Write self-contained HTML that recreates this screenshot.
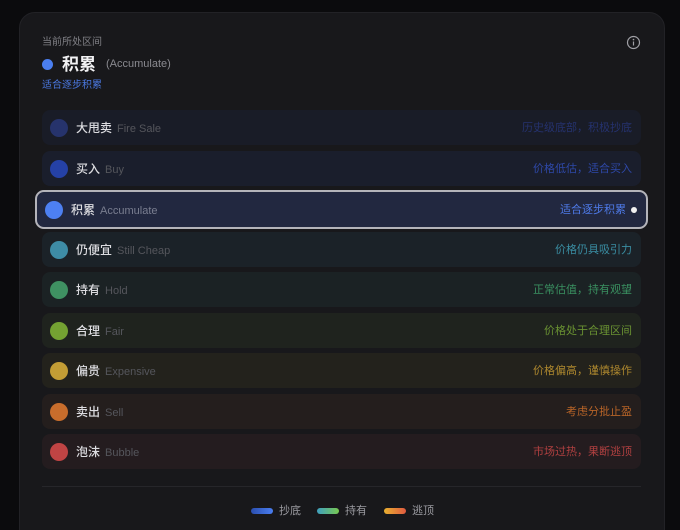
<!DOCTYPE html>
<html><head><meta charset="utf-8"><style>
*{margin:0;padding:0;box-sizing:border-box}
html,body{width:680px;height:530px;overflow:hidden}
body{background:#0b0b0d;font-family:"Liberation Sans","Noto Sans CJK SC",sans-serif;position:relative}
.card{position:absolute;left:19px;top:12px;width:646px;height:540px;background:#18181b;border-radius:16px;border:1px solid #222226}
.a{position:absolute;line-height:1}
.row{position:absolute;left:42px;width:599px;height:35px;border-radius:8px;line-height:36px}
.row .c{position:absolute;left:8px;top:8.5px;width:18px;height:18px;border-radius:50%}
.row .zh{position:absolute;left:34px;top:0;font-size:12px;color:#dcdce0;font-weight:500}
.row .en{font-weight:normal;color:#55565c;font-size:11px;margin-left:5px}
.row .r{position:absolute;right:9px;top:0;font-size:11px}
.lg{position:absolute;top:508px;height:6px;width:22px;border-radius:3px}
.lt{position:absolute;top:506px;font-size:11px;color:#9a9aa0;line-height:1}
</style></head><body>
<div class="card"></div>
<div class="a" style="left:42px;top:38px;font-size:10px;color:#808086">当前所处区间</div>
<div class="a" style="left:42px;top:59px;width:11px;height:11px;border-radius:50%;background:#4a7ef0"></div>
<div class="a" style="left:62px;top:56px;font-size:17px;font-weight:bold;color:#f2f2f4">积累</div>
<div class="a" style="left:106px;top:59px;font-size:11px;color:#8a8a90">(Accumulate)</div>
<div class="a" style="left:42px;top:81px;font-size:10px;color:#4a78e0">适合逐步积累</div>
<svg class="a" style="left:626px;top:35px" width="15" height="15" viewBox="0 0 15 15"><circle cx="7.5" cy="7.5" r="6" fill="none" stroke="#a0a0a6" stroke-width="1.2"/><line x1="7.5" y1="6.5" x2="7.5" y2="10.5" stroke="#a0a0a6" stroke-width="1.2"/><circle cx="7.5" cy="4.6" r="0.8" fill="#a0a0a6"/></svg>

<div class="row" style="top:110px;background:#191c27"><div class="c" style="background:#26336c"></div><div class="zh">大甩卖<span class="en">Fire Sale</span></div><div class="r" style="color:#25326e">历史级底部，积极抄底</div></div>
<div class="row" style="top:151px;background:#1a1e2c"><div class="c" style="background:#2541a6"></div><div class="zh">买入<span class="en">Buy</span></div><div class="r" style="color:#2e48a8">价格低估，适合买入</div></div>
<div class="row" style="left:35px;width:613px;top:190px;height:39px;line-height:36px;background:#222840;border:2px solid #b4b4ba;border-radius:9px"><div class="c" style="left:8px;top:8.5px;background:#4d80f2"></div><div class="zh" style="left:34px">积累<span class="en" style="color:#7a7e90">Accumulate</span></div><div class="r" style="right:20px;color:#4e7ae8">适合逐步积累</div><div class="a" style="right:9px;top:15px;width:6px;height:6px;border-radius:50%;background:#f0f0f0"></div></div>
<div class="row" style="top:232px;background:#1b2228"><div class="c" style="background:#3e8ca6"></div><div class="zh">仍便宜<span class="en">Still Cheap</span></div><div class="r" style="color:#3a8ea3">价格仍具吸引力</div></div>
<div class="row" style="top:272px;background:#1b2224"><div class="c" style="background:#3f9162"></div><div class="zh">持有<span class="en">Hold</span></div><div class="r" style="color:#3a9060">正常估值，持有观望</div></div>
<div class="row" style="top:313px;background:#1f231e"><div class="c" style="background:#74a232"></div><div class="zh">合理<span class="en">Fair</span></div><div class="r" style="color:#6a9232">价格处于合理区间</div></div>
<div class="row" style="top:353px;background:#23221c"><div class="c" style="background:#c39d35"></div><div class="zh">偏贵<span class="en">Expensive</span></div><div class="r" style="color:#ae882e">价格偏高，谨慎操作</div></div>
<div class="row" style="top:394px;background:#241e1d"><div class="c" style="background:#c86d2c"></div><div class="zh">卖出<span class="en">Sell</span></div><div class="r" style="color:#b86428">考虑分批止盈</div></div>
<div class="row" style="top:434px;background:#241c1f"><div class="c" style="background:#c04444"></div><div class="zh">泡沫<span class="en">Bubble</span></div><div class="r" style="color:#b04040">市场过热，果断逃顶</div></div>

<div class="a" style="left:42px;top:486px;width:599px;height:1px;background:#26262a"></div>
<div class="lg" style="left:251px;background:linear-gradient(90deg,#2b4fb0,#4a7ef0)"></div><div class="lt" style="left:279px">抄底</div>
<div class="lg" style="left:317px;background:linear-gradient(90deg,#3fa0c0,#78c850)"></div><div class="lt" style="left:345px">持有</div>
<div class="lg" style="left:384px;background:linear-gradient(90deg,#e8b030,#e05a40)"></div><div class="lt" style="left:412px">逃顶</div>
</body></html>
